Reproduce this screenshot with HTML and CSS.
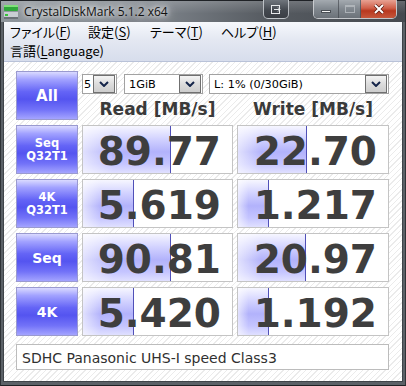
FILE: index.html
```html
<!DOCTYPE html>
<html lang="ja">
<head>
	<meta charset="UTF-8">
	<meta name="viewport" content="width=device-width, initial-scale=1.0">
	<title>CrystalDiskMark 5.1.2 x64</title>

	<link rel="stylesheet" href="styles.css">
</head>
<body>

	<div class="window">

		<header class="titlebar">
			<svg class="titlebar__icon" width="16" height="16" viewBox="0 0 16 16">
				<rect x="1" y="1" width="14" height="6" rx="1" fill="#2fa83a"/>
				<rect x="1" y="1" width="14" height="2" fill="#7fe07a"/>
				<rect x="1" y="8" width="14" height="7" fill="#c9ced3"/>
				<rect x="1" y="13" width="14" height="2" fill="#6b7177"/>
				<rect x="2" y="10" width="3" height="2" fill="#38c23a"/>
			</svg>
			<div class="titlebar__text">CrystalDiskMark 5.1.2 x64</div>
			<div class="capbtn capbtn--extra">
				<svg width="11" height="9" viewBox="0 0 11 9">
					<rect x="0.5" y="0.5" width="8" height="8" fill="none" stroke="#e6e8ea"/>
					<path d="M3 4.5h6M7 2.5l2 2-2 2" fill="none" stroke="#e6e8ea"/>
				</svg>
			</div>
			<div class="capgroup">
				<div class="capbtn capbtn--min"><span class="glyph-min"></span></div>
				<div class="capbtn capbtn--max"><span class="glyph-max"></span></div>
				<div class="capbtn capbtn--close">
					<svg width="12" height="10" viewBox="0 0 12 10">
						<path d="M2 1l8 8M10 1l-8 8" stroke="#5a1a10" stroke-width="3.4"/>
						<path d="M2 1l8 8M10 1l-8 8" stroke="#ffffff" stroke-width="2"/>
					</svg>
				</div>
			</div>
		</header>

		<div class="frame">

			<nav class="menu">
				<div class="menu__line">
					<span class="menu__item menu__item--file">ファイル(<u>F</u>)</span>
					<span class="menu__item menu__item--conf">設定(<u>S</u>)</span>
					<span class="menu__item menu__item--theme">テーマ(<u>T</u>)</span>
					<span class="menu__item">ヘルプ(<u>H</u>)</span>
				</div>
				<div class="menu__line">
					<span class="menu__item">言語(<u>L</u>anguage)</span>
				</div>
			</nav>

			<main class="client">
				<div class="grid">

					<div class="btn btn--all">All</div>

					<div class="controls">
						<div class="controls__selects">
							<div class="select select--count">
								<span class="select__text">5</span>
								<span class="select__arrow"><svg width="10" height="6" viewBox="0 0 10 6"><path d="M1 1l4 4 4-4" fill="none" stroke="#15254a" stroke-width="2"/></svg></span>
							</div>
							<div class="select select--size">
								<span class="select__text">1GiB</span>
								<span class="select__arrow"><svg width="10" height="6" viewBox="0 0 10 6"><path d="M1 1l4 4 4-4" fill="none" stroke="#15254a" stroke-width="2"/></svg></span>
							</div>
							<div class="select select--drive">
								<span class="select__text">L: 1% (0/30GiB)</span>
								<span class="select__arrow"><svg width="10" height="6" viewBox="0 0 10 6"><path d="M1 1l4 4 4-4" fill="none" stroke="#15254a" stroke-width="2"/></svg></span>
							</div>
						</div>
						<div class="controls__heads">
							<div class="head">Read [MB/s]</div>
							<div class="head">Write [MB/s]</div>
						</div>
					</div>

					<!-- Seq Q32T1 -->
					<div class="btn btn--small">Seq<br>Q32T1</div>
					<div class="cell"><div class="cell__bar" style="width: 88px"></div><span class="cell__value">89.77</span></div>
					<div class="cell"><div class="cell__bar" style="width: 69px"></div><span class="cell__value">22.70</span></div>

					<!-- 4K Q32T1 -->
					<div class="btn btn--small">4K<br>Q32T1</div>
					<div class="cell"><div class="cell__bar" style="width: 51px"></div><span class="cell__value">5.619</span></div>
					<div class="cell"><div class="cell__bar" style="width: 31px"></div><span class="cell__value">1.217</span></div>

					<!-- Seq -->
					<div class="btn btn--big">Seq</div>
					<div class="cell"><div class="cell__bar" style="width: 88px"></div><span class="cell__value">90.81</span></div>
					<div class="cell"><div class="cell__bar" style="width: 68px"></div><span class="cell__value">20.97</span></div>

					<!-- 4K -->
					<div class="btn btn--big">4K</div>
					<div class="cell"><div class="cell__bar" style="width: 51px"></div><span class="cell__value">5.420</span></div>
					<div class="cell"><div class="cell__bar" style="width: 31px"></div><span class="cell__value">1.192</span></div>

					<div class="comment">SDHC Panasonic UHS-I speed Class3</div>

				</div>
			</main>

		</div>
	</div>

</body>
</html>
```

FILE: styles.css
```css
* {
	margin: 0;
	padding: 0;
	box-sizing: border-box;
}

body {
	width: 406px;
	height: 386px;
	overflow: hidden;
	background: #2c3034;
	font-family: "DejaVu Sans", sans-serif;
}

.window {
	width: 406px;
	height: 386px;
	display: flex;
	flex-direction: column;
	background: #5b6167;
	border-left: 1px solid #2f3337;
	border-right: 1px solid #2f3337;
	border-bottom: 1px solid #1e2124;
}

/* title bar */
.titlebar {
	height: 22px;
	display: flex;
	align-items: flex-start;
	border-top: 1px solid #1f2226;
	background:
		linear-gradient(to bottom, rgba(255,255,255,.18), rgba(255,255,255,0) 60%),
		linear-gradient(to right, #8f969c 0%, #7a8087 40%, #565b61 66%, #45494f 100%);
}

.titlebar__icon {
	margin: 3px 0 0 2px;
	flex: none;
}

.titlebar__text {
	flex: 1;
	margin: 2px 0 0 5px;
	font-family: "Open Sans", sans-serif;
	font-size: 12px;
	line-height: 17px;
	color: #111;
	text-shadow: 0 0 5px #fff, 0 0 9px rgba(255,255,255,.9), 0 0 12px rgba(255,255,255,.7);
}

.capbtn {
	height: 18px;
	display: flex;
	justify-content: center;
	align-items: center;
}

.capbtn--extra {
	width: 26px;
	margin-right: 24px;
	margin-top: -1px;
	height: 19px;
	border: 1px solid rgba(220,224,228,.75);
	border-top: none;
	border-radius: 0 0 5px 5px;
	background: linear-gradient(to bottom, #70767d, #444950 55%, #3a3e44);
}

.capgroup {
	display: flex;
	margin-top: -1px;
	margin-right: 8px;
	border: 1px solid rgba(225,228,232,.8);
	border-top: none;
	border-radius: 0 0 5px 5px;
	overflow: hidden;
}

.capbtn--min {
	width: 25px;
	background: linear-gradient(to bottom, #a4aab0, #80878e 50%, #6c7279);
	border-right: 1px solid rgba(60,64,70,.6);
}

.capbtn--max {
	width: 22px;
	background: linear-gradient(to bottom, #a4aab0, #80878e 50%, #6c7279);
	border-right: 1px solid rgba(60,64,70,.6);
}

.capbtn--close {
	width: 35px;
	background: linear-gradient(to bottom, #e8a293, #d0604a 45%, #b8381f 60%, #c5573c);
}

.glyph-min {
	width: 10px;
	height: 3px;
	margin-top: 5px;
	background: #f4f4f4;
	border: 1px solid #4a4f55;
}

.glyph-max {
	width: 10px;
	height: 8px;
	border: 1px solid #b8bdc2;
	border-top-width: 2px;
	opacity: .8;
}

/* frame + menu */
.frame {
	flex: 1;
	display: flex;
	flex-direction: column;
	margin: 0 2px 3px 2px;
	border: 1px solid #3f4449;
	border-top: none;
}

.menu {
	height: 40px;
	padding-left: 5px;
	background: linear-gradient(to bottom, #f6f8fc 0%, #e4e8f2 45%, #d7ddec 100%);
	border-bottom: 1px solid #b9c2d8;
	font-family: "Noto Sans CJK JP", sans-serif;
	font-feature-settings: "palt";
	font-size: 13px;
	color: #000;
}

.menu__line {
	height: 19px;
	display: flex;
	align-items: center;
}

.menu__item {
	line-height: 19px;
	padding: 0 1px;
}

.menu__item--file { width: 78px; }
.menu__item--conf { width: 62px; }
.menu__item--theme { width: 71px; }

.menu__item u {
	text-decoration-thickness: 1px;
	text-underline-offset: 2px;
}

/* client area */
.client {
	flex: 1;
	padding: 9px 13px 8px 12px;
	background: repeating-linear-gradient(135deg, #ffffff 0px, #ffffff 3px, #ebebeb 3px, #ebebeb 4px);
}

.grid {
	display: grid;
	grid-template-columns: 62px 151px 152px;
	grid-template-rows: repeat(5, 49px) 29px;
	column-gap: 4px;
	row-gap: 5px;
}

.btn {
	border: 1px solid #9a9ad0;
	background: linear-gradient(to bottom, #dadaff 0%, #a2a2ff 16%, #6464f6 42%, #5454f0 58%, #7272f8 80%, #a4a4ff 100%);
	color: #fff;
	font-weight: bold;
	display: flex;
	justify-content: center;
	align-items: center;
	text-align: center;
}

.btn--all {
	font-size: 15px;
}

.btn--small {
	font-size: 11.5px;
	line-height: 13px;
	padding-top: 1px;
}

.btn--big {
	font-size: 14px;
}

.controls {
	grid-column: 2 / 4;
	display: flex;
	flex-direction: column;
}

.controls__selects {
	display: flex;
	gap: 7px;
	margin-top: 3px;
	height: 20px;
}

.select {
	display: flex;
	align-items: center;
	border: 1px solid #a2a2a2;
	background: #fff;
	padding: 0 1px 0 0;
	font-size: 11.3px;
	color: #000;
}

.select--count { width: 35px; }
.select--size { width: 79px; margin-right: -1px; }
.select--drive { width: 180px; }

.select__text {
	flex: 1;
	overflow: hidden;
	white-space: nowrap;
	padding-left: 4px;
}

.select--count .select__text { padding-left: 1px; }

.select__arrow {
	width: 22px;
	height: 18px;
	display: flex;
	justify-content: center;
	align-items: center;
	border: 1px solid #707070;
	background: linear-gradient(to bottom, #f4f4f4, #dcdcdc 50%, #cdcdcd);
}

.controls__heads {
	display: grid;
	grid-template-columns: 151px 152px;
	column-gap: 4px;
	margin-top: 5px;
}

.head {
	text-align: center;
	font-size: 17px;
	font-weight: bold;
	color: #3a3a3a;
	line-height: 20px;
}

/* result cells */
.cell {
	position: relative;
	border: 1px solid #c4c4c4;
	background: #fff;
	overflow: hidden;
	text-align: right;
	padding: 5px 11px 0 0;
}

.cell__bar {
	position: absolute;
	left: 0;
	top: 0;
	bottom: 0;
	border-right: 1px solid #5050b8;
	background:
		linear-gradient(to right, rgba(255,255,255,.6), rgba(255,255,255,0) 35%),
		linear-gradient(to bottom, #f6f6ff 0%, #d2d2ff 28%, #b2b2fb 55%, #c4c4ff 80%, #e0e0ff 100%);
}

.cell__value {
	position: relative;
	font-size: 39px;
	font-weight: bold;
	line-height: 41px;
	color: #3e3e3e;
}

.comment {
	grid-column: 1 / 4;
	margin-top: 3px;
	border: 1px solid #bcbcbc;
	background: #fff;
	padding-left: 5px;
	font-size: 14px;
	line-height: 27px;
	color: #303030;
}
```
